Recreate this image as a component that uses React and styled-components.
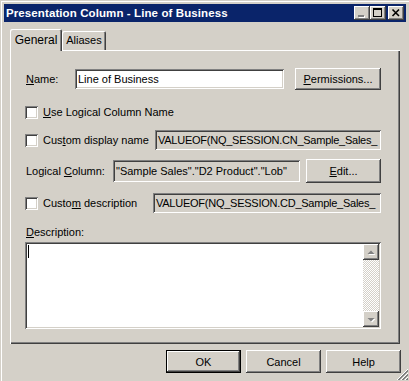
import React from "react";
import styled, { createGlobalStyle, css } from "styled-components";

const Global = createGlobalStyle`
  html, body { margin: 0; padding: 0; background: #d4d0c8; }
  body {
    font-family: "Liberation Sans", Arial, sans-serif;
    font-size: 11px;
    color: #000;
    overflow: hidden;
  }
  * { box-sizing: border-box; }
`;

const raised = css`
  box-shadow: inset -1px -1px #404040, inset 1px 1px #fff,
    inset -2px -2px #808080, inset 2px 2px #d4d0c8;
`;
const sunken = css`
  box-shadow: inset 1px 1px #808080, inset -1px -1px #fff,
    inset 2px 2px #404040, inset -2px -2px #d4d0c8;
`;

const Window = styled.div`
  position: relative;
  width: 409px;
  height: 381px;
  background: #d4d0c8;
  padding: 4px 3px 0 4px;
  box-shadow: inset 1px 1px #d4d0c8, inset 2px 2px #fff;
  display: flex;
  flex-direction: column;
`;

const TitleBar = styled.div`
  height: 18px;
  background: #0a246a;
  display: flex;
  align-items: center;
  padding: 0 2px 0 2px;
`;

const TitleText = styled.div`
  flex: 1;
  color: #fff;
  font-weight: bold;
  font-size: 11.5px;
  line-height: 13px;
  letter-spacing: 0.1px;
  white-space: nowrap;
`;

const CapButtons = styled.div`
  display: flex;
`;

const CapButton = styled.div`
  width: 16px;
  height: 14px;
  background: #d4d0c8;
  ${raised};
  margin-left: ${(p) => p.$ml || 0}px;
  display: flex;
  svg { display: block; }
`;

const Body = styled.div`
  flex: 1;
  display: flex;
  flex-direction: column;
  padding-top: 7px;
`;

const TabStrip = styled.div`
  display: flex;
  align-items: flex-end;
  height: 21px;
  margin-left: 6px;
  position: relative;
  z-index: 1;
`;

const Tab = styled.div`
  height: ${(p) => (p.$active ? 22 : 19)}px;
  margin-bottom: ${(p) => (p.$active ? -1 : 0)}px;
  width: ${(p) => p.$w}px;
  background: #d4d0c8;
  border-radius: 2px 2px 0 0;
  box-shadow: inset 1px 1px #fff, inset -1px 0 #404040, inset -2px 0 #808080;
  display: flex;
  justify-content: center;
  padding-top: ${(p) => (p.$active ? 5 : 3)}px;
  line-height: 13px;
  font-size: ${(p) => (p.$active ? 12 : 11)}px;
`;

const Panel = styled.div`
  margin: 0 6px;
  height: 294px;
  padding: 18px 19px 0 15px;
  box-shadow: inset 1px 1px #fff, inset -1px -1px #404040,
    inset -2px -2px #808080;
  display: flex;
  flex-direction: column;
`;

const Row = styled.div`
  display: flex;
  align-items: center;
  height: ${(p) => p.$h}px;
  margin-top: ${(p) => p.$mt || 0}px;
  line-height: 13px;
`;

const Label = styled.div`
  width: ${(p) => p.$w}px;
  padding-left: 1px;
  white-space: nowrap;
  flex-shrink: 0;
`;

const CheckGroup = styled.div`
  display: flex;
  align-items: center;
  width: ${(p) => (p.$w ? `${p.$w}px` : "auto")};
  flex-shrink: 0;
  white-space: nowrap;
`;

const Checkbox = styled.div`
  width: 13px;
  height: 13px;
  background: #fff;
  ${sunken};
  margin-right: 5px;
  flex-shrink: 0;
`;

const Field = styled.div`
  width: ${(p) => p.$w}px;
  height: ${(p) => p.$h || 20}px;
  background: ${(p) => (p.$gray ? "#d4d0c8" : "#fff")};
  ${sunken};
  padding: 0 2px 0 3px;
  display: flex;
  align-items: center;
  overflow: hidden;
  white-space: nowrap;
  letter-spacing: ${(p) => (p.$tight ? "-0.25px" : "0")};
  flex-shrink: 0;
`;

const Button = styled.div`
  width: ${(p) => p.$w || 75}px;
  height: ${(p) => p.$h || 23}px;
  margin-left: ${(p) => p.$ml || 0}px;
  background: #d4d0c8;
  display: flex;
  align-items: center;
  justify-content: center;
  flex-shrink: 0;
  ${(p) =>
    p.$default
      ? css`
          box-shadow: inset 0 0 0 1px #000, inset -2px -2px #404040,
            inset 2px 2px #fff, inset -3px -3px #808080;
        `
      : raised};
`;

const TextArea = styled.div`
  margin-top: 3px;
  width: 356px;
  height: 87px;
  background: #fff;
  ${sunken};
  padding: 2px;
  display: flex;
`;

const TextContent = styled.div`
  flex: 1;
  padding: 1px 1px;
`;

const Caret = styled.div`
  width: 1px;
  height: 13px;
  background: #000;
`;

const ScrollBar = styled.div`
  width: 16px;
  display: flex;
  flex-direction: column;
  justify-content: space-between;
  background: repeating-conic-gradient(#fff 0 25%, #d4d0c8 0 50%) 0 0 / 2px 2px;
`;

const ScrollButton = styled.div`
  width: 16px;
  height: 16px;
  background: #d4d0c8;
  ${raised};
  display: flex;
  svg { display: block; }
`;

const Footer = styled.div`
  display: flex;
  justify-content: flex-end;
  padding: 6px 5px 0 0;
`;

const Grip = styled.svg`
  position: absolute;
  right: 0;
  bottom: 0;
`;

const Arrow = ({ up }) => (
  <svg width="16" height="16">
    {up ? (
      <>
        <polygon points="4.5,10 11.5,10 8,6.5" fill="#fff" transform="translate(1,1)" />
        <polygon points="4.5,10 11.5,10 8,6.5" fill="#808080" />
      </>
    ) : (
      <>
        <polygon points="4.5,7 11.5,7 8,10.5" fill="#fff" transform="translate(1,1)" />
        <polygon points="4.5,7 11.5,7 8,10.5" fill="#808080" />
      </>
    )}
  </svg>
);

export default function App() {
  return (
    <>
      <Global />
      <Window>
        <TitleBar>
          <TitleText>Presentation Column - Line of Business</TitleText>
          <CapButtons>
            <CapButton>
              <svg width="16" height="14">
                <rect x="5" y="10" width="6" height="2" fill="#fff" />
                <rect x="4" y="9" width="6" height="2" fill="#808080" />
              </svg>
            </CapButton>
            <CapButton>
              <svg width="16" height="14">
                <rect x="3" y="2" width="9" height="2" fill="#000" />
                <rect x="3" y="2" width="1" height="9" fill="#000" />
                <rect x="11" y="2" width="1" height="9" fill="#000" />
                <rect x="3" y="10" width="9" height="1" fill="#000" />
              </svg>
            </CapButton>
            <CapButton $ml={2}>
              <svg width="16" height="14">
                <path d="M4.5 3.5 L11 10 M11 3.5 L4.5 10" stroke="#000" strokeWidth="1.6" />
              </svg>
            </CapButton>
          </CapButtons>
        </TitleBar>
        <Body>
          <TabStrip>
            <Tab $active $w={52}>General</Tab>
            <Tab $w={44}>Aliases</Tab>
          </TabStrip>
          <Panel>
            <Row $h={22}>
              <Label $w={50}><u>N</u>ame:</Label>
              <Field $w={209}>Line of Business</Field>
              <Button $w={86} $h={22} $ml={11}><u>P</u>ermissions...</Button>
            </Row>
            <Row $h={13} $mt={16}>
              <CheckGroup>
                <Checkbox />
                <span><u>U</u>se Logical Column Name</span>
              </CheckGroup>
            </Row>
            <Row $h={20} $mt={11}>
              <CheckGroup $w={130}>
                <Checkbox />
                <span>Cus<u>t</u>om display name</span>
              </CheckGroup>
              <Field $w={226} $gray $tight>VALUEOF(NQ_SESSION.CN_Sample_Sales_</Field>
            </Row>
            <Row $h={24} $mt={9}>
              <Label $w={88}>Logical <u>C</u>olumn:</Label>
              <Field $w={187} $h={22} $gray>"Sample Sales"."D2 Product"."Lob"</Field>
              <Button $w={75} $h={24} $ml={6}><u>E</u>dit...</Button>
            </Row>
            <Row $h={20} $mt={10}>
              <CheckGroup $w={128}>
                <Checkbox />
                <span>Custo<u>m</u> description</span>
              </CheckGroup>
              <Field $w={228} $gray $tight>VALUEOF(NQ_SESSION.CD_Sample_Sales_</Field>
            </Row>
            <Row $h={13} $mt={13}>
              <Label $w={100}><u>D</u>escription:</Label>
            </Row>
            <TextArea>
              <TextContent>
                <Caret />
              </TextContent>
              <ScrollBar>
                <ScrollButton><Arrow up /></ScrollButton>
                <ScrollButton><Arrow /></ScrollButton>
              </ScrollBar>
            </TextArea>
          </Panel>
          <Footer>
            <Button $default>OK</Button>
            <Button $ml={5}>Cancel</Button>
            <Button $ml={5}>Help</Button>
          </Footer>
        </Body>
        <Grip width="13" height="13">
          <path d="M12 1 L1 12 M12 5 L5 12 M12 9 L9 12" stroke="#fff" />
          <path d="M12 2 L2 12 M12 6 L6 12 M12 10 L10 12" stroke="#808080" />
          <path d="M12 3 L3 12 M12 7 L7 12 M12 11 L11 12" stroke="#808080" />
        </Grip>
      </Window>
    </>
  );
}
